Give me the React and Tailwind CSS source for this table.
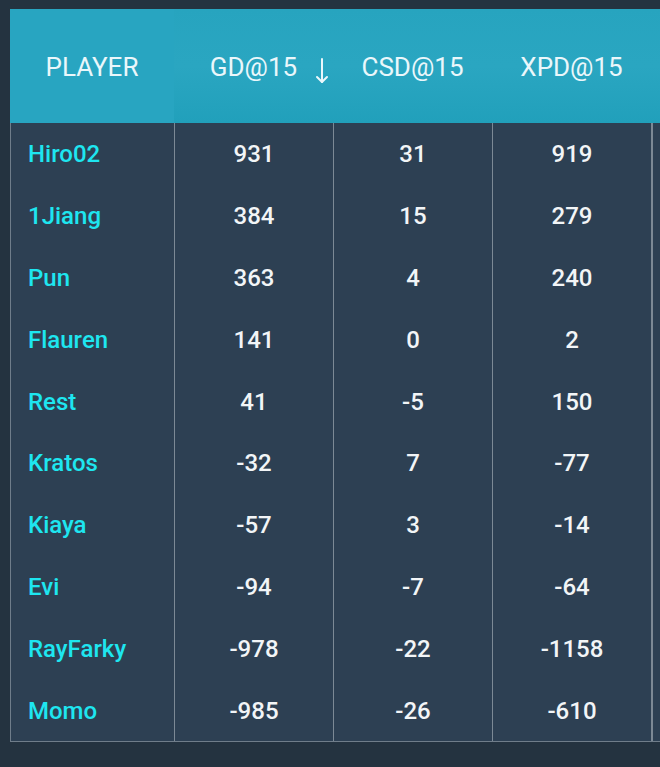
import { useState } from "react";

const rows = [
  ["Hiro02", 931, 31, 919],
  ["1Jiang", 384, 15, 279],
  ["Pun", 363, 4, 240],
  ["Flauren", 141, 0, 2],
  ["Rest", 41, -5, 150],
  ["Kratos", -32, 7, -77],
  ["Kiaya", -57, 3, -14],
  ["Evi", -94, -7, -64],
  ["RayFarky", -978, -22, -1158],
  ["Momo", -985, -26, -610],
];

const head = "grid grid-cols-[164px_159px_159px_159px_120px]";
const body = "grid grid-cols-[163px_159px_159px_159px_120px]";

function SortArrow({ desc }) {
  return (
    <svg width="14" height="28" viewBox="0 0 14 28" fill="none" stroke="#eaf7fb" strokeWidth="2" strokeLinecap="round" strokeLinejoin="round" className={desc ? "" : "rotate-180"}>
      <path d="M7 2v23" />
      <path d="M2 20l5 5 5-5" />
    </svg>
  );
}

export default function App() {
  const [sortDesc] = useState(true);

  return (
    <div
      className="h-screen overflow-hidden bg-[#243340] pt-[9px] pl-[10px]"
      style={{ fontFamily: "Roboto, 'Liberation Sans', sans-serif" }}
    >
      <div className="w-[762px]">
        {/* header */}
        <div className={`${head} h-[114px] bg-gradient-to-b from-[#27a4bf] via-[#2aa6c1] to-[#21a0bb] text-[#eaf7fb] text-[26px] font-normal`}>
          <div className="flex items-center justify-center pt-[2px] bg-[#28a5c1]">PLAYER</div>
          <div className="relative flex items-center justify-center pt-[2px]">
            GD@15
            <span className="absolute right-[4px] top-[48px]">
              <SortArrow desc={sortDesc} />
            </span>
          </div>
          <div className="flex items-center justify-center pt-[2px]">CSD@15</div>
          <div className="flex items-center justify-center pt-[2px]">XPD@15</div>
          <div />
        </div>

        {/* body */}
        <div className="bg-[#2d4053] border-l border-b border-[#6f7d8a]">
          {rows.map(([name, gd, csd, xpd]) => (
            <div key={name} className={`${body} h-[61.8px] text-[24px] font-medium`}>
              <div className="flex items-center pl-[17px] pt-[1px] text-[#1ee6f0]">{name}</div>
              <div className="flex items-center justify-center pt-[1px] border-l border-[#7c8995] text-[#f2f5f7]">{gd}</div>
              <div className="flex items-center justify-center pt-[1px] border-l border-[#7c8995] text-[#f2f5f7]">{csd}</div>
              <div className="flex items-center justify-center pt-[1px] border-l border-[#7c8995] text-[#f2f5f7]">{xpd}</div>
              <div className="border-l-2 border-[#7c8995]" />
            </div>
          ))}
        </div>
      </div>
    </div>
  );
}
